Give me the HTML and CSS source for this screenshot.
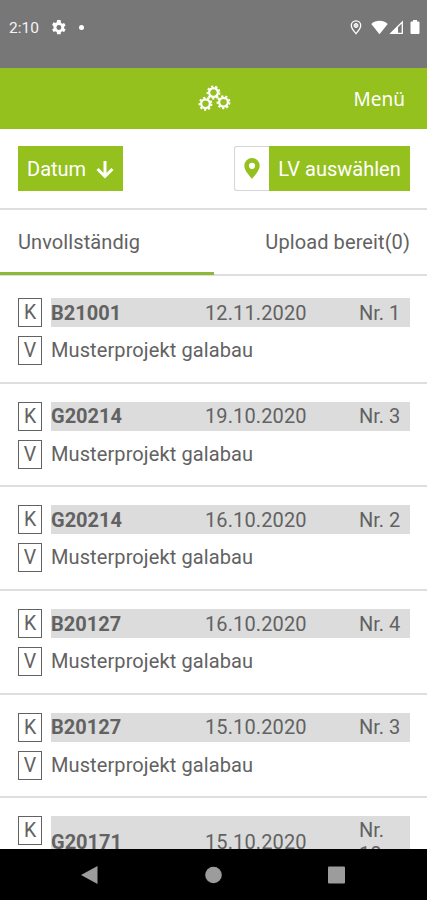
FILE: index.html
```html
<!DOCTYPE html>
<html lang="de">
<head>
<meta charset="utf-8">
<title>Projekte</title>
<link rel="stylesheet" href="styles.css">
</head>
<body>
<div class="status">
  <span class="clock">2:10</span>
  <svg class="gear" width="15" height="15" viewBox="2 2 20 20"><path fill="#fff" fill-rule="evenodd" d="M19.4 13a7.500 7.500 0 0 0 0-2l2.100-1.600-2-3.500-2.500 1a7.500 7.500 0 0 0-1.700-1L14.900 2h-4.800l-.4 2.900a7.500 7.500 0 0 0-1.700 1l-2.500-1-2 3.500L5.600 11a7.500 7.500 0 0 0 0 2l-2.100 1.600 2 3.500 2.500-1a7.500 7.500 0 0 0 1.700 1l.4 2.900h4.800l.4-2.900a7.500 7.500 0 0 0 1.700-1l2.500 1 2-3.500zM12.500 15.300a3.300 3.300 0 1 1 0-6.600 3.300 3.300 0 0 1 0 6.600z"/></svg>
  <span class="dot"></span>
  <span class="grow"></span>
  <svg width="12" height="15" viewBox="0 0 12 15"><path fill="none" stroke="#fff" stroke-width="1.300" d="M6 13.700C3.500 10.800 1.300 8 1.300 5.500a4.700 4.700 0 0 1 9.400 0c0 2.500-2.200 5.300-4.700 8.200z"/><circle cx="6" cy="5.500" r="2" fill="#ddd" stroke="#fff"/></svg>
  <svg class="wifi" width="17" height="15" viewBox="0 0 17 15"><path fill="#fff" d="M.3 4C4.800-.3 12.200-.3 16.700 4L8.500 14.300z"/></svg>
  <svg class="cell" width="15" height="15" viewBox="0 0 15 15"><path fill="none" stroke="#fff" stroke-width="1.300" d="M2 13.300 13.300 2v11.300z"/><path fill="#fff" d="M1 14 9 6v8z"/></svg>
  <svg class="battery" width="10" height="15" viewBox="0 0 10 15"><path fill="#fff" d="M3 0h4v1.500h1.500q1 0 1 1V13q0 1-1 1h-7q-1 0-1-1V2.500q0-1 1-1H3z"/></svg>
</div>
<header class="header">
  <svg class="logo" width="34" height="28" viewBox="0 0 34 28">
    <defs><g id="cog"><circle r="4.400" fill="none" stroke="#fff" stroke-width="2.200"/><circle r="6" fill="none" stroke="#fff" stroke-width="1.900" stroke-dasharray="2.200 1.989"/></g></defs>
    <use href="#cog" x="16.500" y="7.500"/><use href="#cog" x="8.500" y="18.700"/><use href="#cog" x="26.500" y="17.200"/>
  </svg>
  <span class="menu">Menü</span>
</header>
<div class="toolbar">
  <div class="btn sort">Datum<svg width="18" height="20" viewBox="0 0 18 20"><path fill="none" stroke="#fff" stroke-width="3" d="M9 1v15M1.500 9 9 16.500 16.500 9"/></svg></div>
  <div class="select">
    <div class="pinbox"><svg width="16" height="21" viewBox="0 0 16 21"><path fill="#95c11f" fill-rule="evenodd" d="M8 0a7.700 7.700 0 0 1 7.700 7.700C15.700 12 11 17.500 8 20.700 5 17.500.3 12 .3 7.700A7.700 7.700 0 0 1 8 0zm0 4.700a3.100 3.100 0 1 0 0 6.200 3.100 3.100 0 0 0 0-6.200z"/></svg></div>
    <div class="btn lv">LV auswählen</div>
  </div>
</div>
<nav class="tabs"><div class="tab active">Unvollständig</div><div class="tab right">Upload bereit(0)</div></nav>
<main class="list">
  <article class="item"><div class="line"><span class="box">K</span><div class="bar"><b>B21001</b><span class="date">12.11.2020</span><span class="nr">Nr. 1</span></div></div><div class="line"><span class="box">V</span><span class="name">Musterprojekt galabau</span></div></article>
  <article class="item"><div class="line"><span class="box">K</span><div class="bar"><b>G20214</b><span class="date">19.10.2020</span><span class="nr">Nr. 3</span></div></div><div class="line"><span class="box">V</span><span class="name">Musterprojekt galabau</span></div></article>
  <article class="item"><div class="line"><span class="box">K</span><div class="bar"><b>G20214</b><span class="date">16.10.2020</span><span class="nr">Nr. 2</span></div></div><div class="line"><span class="box">V</span><span class="name">Musterprojekt galabau</span></div></article>
  <article class="item"><div class="line"><span class="box">K</span><div class="bar"><b>B20127</b><span class="date">16.10.2020</span><span class="nr">Nr. 4</span></div></div><div class="line"><span class="box">V</span><span class="name">Musterprojekt galabau</span></div></article>
  <article class="item"><div class="line"><span class="box">K</span><div class="bar"><b>B20127</b><span class="date">15.10.2020</span><span class="nr">Nr. 3</span></div></div><div class="line"><span class="box">V</span><span class="name">Musterprojekt galabau</span></div></article>
  <article class="item"><div class="line"><span class="box">K</span><div class="bar"><b>G20171</b><span class="date">15.10.2020</span><span class="nr">Nr. 10</span></div></div></article>
</main>
<footer class="navbar">
  <svg width="17" height="20" viewBox="0 0 17 20"><path fill="#9c9c9c" d="M0 10 16.500 1v18z"/></svg>
  <svg width="17" height="20" viewBox="0 0 17 20"><circle cx="8.500" cy="10" r="8.300" fill="#9c9c9c"/></svg>
  <svg width="17" height="20" viewBox="0 0 17 20"><rect y="1.500" width="17" height="17" rx="1" fill="#9c9c9c"/></svg>
</footer>
</body>
</html>
```
FILE: styles.css
```css
* { box-sizing: border-box; }
body {
  margin: 0;
  width: 427px;
  height: 900px;
  overflow: hidden;
  display: flex;
  flex-direction: column;
  background: #fff;
  color: #626262;
  font: 20px/29px Roboto, sans-serif;
}
svg { display: block; flex: none; }
.status {
  flex: none;
  height: 68px;
  padding: 20px 7px 0 9px;
  background: #777;
  display: flex;
  align-items: flex-start;
}
.clock { width: 42px; color: #f4f4f4; font-size: 15.500px; line-height: 17px; }
.dot { width: 5px; height: 5px; margin: 5px 0 0 13px; border-radius: 50%; background: #fff; }
.grow { flex: 1; }
.wifi { margin-left: 9px; }
.cell { margin-left: 1px; }
.battery { margin-left: 6px; }
.header {
  flex: none;
  height: 61px;
  background: #95c11f;
  display: grid;
  grid-template-columns: 1fr 34px 1fr;
  align-items: center;
  padding: 0 22px;
}
.logo { grid-column: 2; }
.menu { justify-self: end; color: #fff; font: 19px/28px "Noto Sans", sans-serif; padding-top: 1px; }
.toolbar {
  flex: none;
  height: 81px;
  padding: 17px 17px 0 18px;
  border-bottom: 2px solid #dedede;
  display: flex;
  justify-content: space-between;
  align-items: flex-start;
}
.btn { height: 45px; padding-top: 2px; background: #95c11f; color: #fff; display: flex; align-items: center; white-space: nowrap; }
.sort { width: 105px; padding: 2px 9px 0; justify-content: space-between; }
.select { display: flex; }
.pinbox { width: 35px; height: 45px; border: 1px solid #d5d5d5; border-right: 0; border-radius: 3px 0 0 3px; display: flex; align-items: center; justify-content: center; }
.lv { width: 141px; justify-content: center; }
.tabs { flex: none; height: 66px; display: flex; border-bottom: 2px solid #dedede; }
.tab { flex: 1; height: 65px; padding: 18px 17px 0 18px; white-space: nowrap; letter-spacing: .1px; }
.active { border-bottom: 3px solid #8db936; }
.right { text-align: right; }
.list { flex: 1; min-height: 0; overflow: hidden; padding-top: 4px; }
.item { height: 103.700px; padding: 18px 17px 0 18px; border-bottom: 2px solid #dedede; }
.item:last-child { border: 0; }
.line { display: flex; align-items: flex-start; gap: 9px; }
.line + .line { margin-top: 9px; }
.box { flex: none; width: 24px; height: 29px; border: 1px solid #626262; text-align: center; line-height: 27px; font-size: 19.500px; }
.bar { flex: 1; min-height: 29px; padding: 2px 0; background: #dcdcdc; display: flex; align-items: center; letter-spacing: .12px; line-height: 24px; }
.bar b { width: 154px; letter-spacing: 0; }
.date { width: 154px; }
.nr { width: 44px; letter-spacing: 0; }
.name { letter-spacing: .1px; white-space: nowrap; }
.navbar { flex: none; height: 51px; background: #000; display: flex; justify-content: space-between; align-items: center; padding: 0 82px 0 81px; }
```
